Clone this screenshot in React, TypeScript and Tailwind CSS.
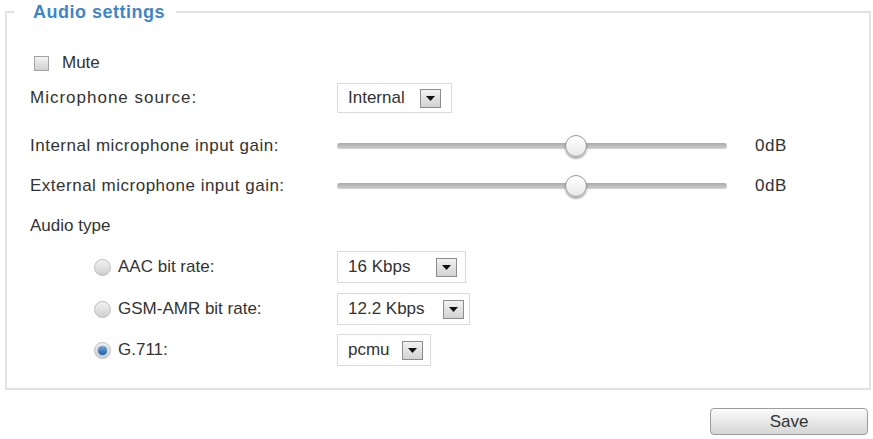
import type { ReactNode } from "react";

const FONT = "font-['Liberation_Sans',Arial,sans-serif]";

function DropArrow() {
  return (
    <span className="flex h-[19px] w-[21px] items-center justify-center border border-[#8c8c8c] bg-gradient-to-b from-[#f2f2f2] to-[#d2d2d2]">
      <svg width="9" height="5" viewBox="0 0 9 5">
        <polygon points="0,0 9,0 4.5,5" fill="#111" />
      </svg>
    </span>
  );
}

function Select({ value, width, pad, height = 32 }: { value: string; width: number; pad: number; height?: number }) {
  return (
    <div
      className="flex items-center justify-between border border-[#dadada] bg-white pl-[10px] text-[17px] text-[#333]"
      style={{ width, height, paddingRight: pad }}
    >
      <span>{value}</span>
      <DropArrow />
    </div>
  );
}

function Slider({ pos }: { pos: number }) {
  return (
    <div className="relative h-[24px] w-[390px]">
      <div className="absolute left-0 right-0 top-[9px] h-[6px] rounded-full bg-gradient-to-b from-[#a9a9a9] to-[#d2d2d2]" />
      <span
        className="absolute top-[1px] h-[22px] w-[22px] -translate-x-1/2 rounded-full border border-[#979797] bg-gradient-to-b from-white to-[#e8e8e8] shadow-[0_2px_2px_rgba(0,0,0,0.3)]"
        style={{ left: pos }}
      />
    </div>
  );
}

function Radio({ checked }: { checked?: boolean }) {
  return (
    <span className="flex h-[17px] w-[17px] items-center justify-center rounded-full border border-[#bdbdbd] bg-gradient-to-b from-[#f2f2f2] to-[#cfcfcf]">
      {checked ? (
        <span className="h-[9px] w-[9px] rounded-full bg-gradient-to-b from-[#6fa8de] to-[#1f5f9f] shadow-[0_0_1px_#0b3a6a]" />
      ) : null}
    </span>
  );
}

function Row({ label, className, children }: { label: ReactNode; className: string; children?: ReactNode }) {
  return (
    <div className={`flex h-[34px] items-center ${className}`}>
      <div className="w-[307px] shrink-0">{label}</div>
      {children}
    </div>
  );
}

const audioTypes = [
  { label: "AAC bit rate:", value: "16 Kbps", width: 129, pad: 8, checked: false, mt: "mt-[7px]" },
  { label: "GSM-AMR bit rate:", value: "12.2 Kbps", width: 133, pad: 5, checked: false, mt: "mt-[8px]" },
  { label: "G.711:", value: "pcmu", width: 94, pad: 7, checked: true, mt: "mt-[7px]" },
];

export default function App() {
  return (
    <div className={`h-[439px] w-[873px] overflow-hidden bg-white text-[17px] text-[#333] ${FONT}`}>
      <fieldset className="ml-[5px] mt-[2px] h-[388px] w-[866px] border-2 border-[#e2e2e2]">
        <legend className="ml-[7px] pl-[19px] pr-[11px] text-[18px] font-bold leading-[20px] tracking-[0.5px] text-[#3f86c8]">
          Audio settings
        </legend>

        <div className="flex flex-col pl-[23px]">
          <div className="mt-[24px] flex h-[34px] items-center pl-[4px]">
            <span className="h-[15px] w-[15px] border border-[#a4a4a4] bg-gradient-to-b from-[#f3f3f3] to-[#d0d0d0]" />
            <span className="ml-[13px]">Mute</span>
          </div>

          <Row label={<span className="tracking-[1px]">Microphone source:</span>} className="mt-[1px]">
            <Select value="Internal" width={115} pad={10} height={30} />
          </Row>

          <Row label={<span className="tracking-[0.5px]">Internal microphone input gain:</span>} className="mt-[14px]">
            <Slider pos={239} />
            <span className="ml-[28px] tracking-[0.5px]">0dB</span>
          </Row>

          <Row label={<span className="tracking-[0.5px]">External microphone input gain:</span>} className="mt-[6px]">
            <Slider pos={239} />
            <span className="ml-[28px] tracking-[0.5px]">0dB</span>
          </Row>

          <div className="mt-[6px] flex h-[34px] items-center">Audio type</div>

          {audioTypes.map((opt) => (
            <Row
              key={opt.label}
              className={opt.mt}
              label={
                <div className="flex items-center pl-[64px]">
                  <Radio checked={opt.checked} />
                  <span className="ml-[7px]">{opt.label}</span>
                </div>
              }
            >
              <Select value={opt.value} width={opt.width} pad={opt.pad} />
            </Row>
          ))}
        </div>
      </fieldset>

      <div className="mt-[18px] flex justify-end pr-[5px]">
        <button
          type="button"
          className="h-[27px] w-[158px] rounded-[4px] border border-[#9a9a9a] bg-gradient-to-b from-[#fbfbfb] to-[#d6d6d6] text-[17px] text-[#333] shadow-[inset_0_1px_0_#fff]"
        >
          Save
        </button>
      </div>
    </div>
  );
}
